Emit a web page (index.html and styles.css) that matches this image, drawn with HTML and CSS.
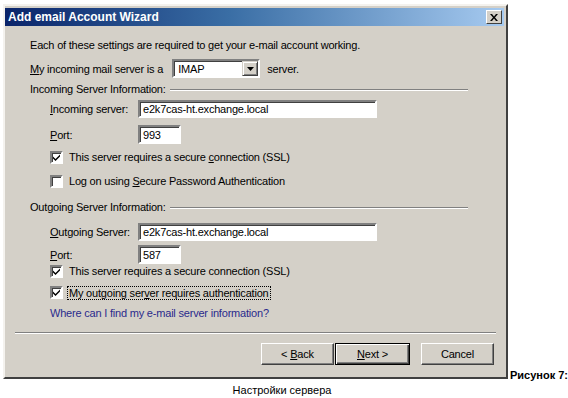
FILE: index.html
```html
<!DOCTYPE html>
<html>
<head>
<meta charset="utf-8">
<link rel="stylesheet" href="styles.css">
</head>
<body>
<div class="page">
  <div class="shot">
    <div class="dialog">
      <div class="titlebar">
        <span class="title">Add email Account Wizard</span>
        <span class="close"><svg width="8" height="7" viewBox="0 0 8 7"><path d="M0 0h2l2 2.5L6 0h2L5 3.5 8 7H6L4 4.5 2 7H0l3-3.5z" fill="#000"/></svg></span>
      </div>
      <div class="content">
        <div class="row intro">Each of these settings are required to get your e-mail account working.</div>
        <div class="row type-row">
          <span><u>M</u>y incoming mail server is a</span>
          <div class="select"><span class="sel-text">IMAP</span><span class="drop"><svg width="7" height="4" viewBox="0 0 7 4"><path d="M0 0h7L3.5 4z" fill="#000"/></svg></span></div>
          <span>server.</span>
        </div>
        <div class="row group g1"><span>Incoming Server Information:</span><span class="etch"></span></div>
        <div class="row field f1"><span class="label"><u>I</u>ncoming server:</span><div class="input wide">e2k7cas-ht.exchange.local</div></div>
        <div class="row field f2"><span class="label"><u>P</u>ort:</span><div class="input port">993</div></div>
        <div class="row check c1"><span class="box checked"><svg width="7" height="7" viewBox="0 0 7 7"><path d="M0 2.5l2.5 2.5L7 0.5V2.5L2.5 7 0 4.5z" fill="#000"/></svg></span><span>This server requires a secure <u>c</u>onnection (SSL)</span></div>
        <div class="row check c2"><span class="box"></span><span>Log on using <u>S</u>ecure Password Authentication</span></div>
        <div class="row group g2"><span>Outgoing Server Information:</span><span class="etch"></span></div>
        <div class="row field f3"><span class="label"><u>O</u>utgoing Server:</span><div class="input wide">e2k7cas-ht.exchange.local</div></div>
        <div class="row field f4"><span class="label"><u>P</u>ort:</span><div class="input port">587</div></div>
        <div class="row check c3"><span class="box checked"><svg width="7" height="7" viewBox="0 0 7 7"><path d="M0 2.5l2.5 2.5L7 0.5V2.5L2.5 7 0 4.5z" fill="#000"/></svg></span><span>This server requires a secure connection (SSL)</span></div>
        <div class="row check c4"><span class="box checked"><svg width="7" height="7" viewBox="0 0 7 7"><path d="M0 2.5l2.5 2.5L7 0.5V2.5L2.5 7 0 4.5z" fill="#000"/></svg></span><span class="focus">My outgoing ser<u>v</u>er requires authentication</span></div>
        <div class="row link">Where can I find my e-mail server information?</div>
      </div>
      <div class="sep"></div>
      <div class="buttons">
        <div class="btn"><span>&lt; <u>B</u>ack</span></div>
        <div class="btn default"><span><u>N</u>ext &gt;</span></div>
        <div class="btn cancel"><span>Cancel</span></div>
      </div>
    </div>
    <div class="fig">Рисунок 7:</div>
  </div>
  <div class="caption">Настройки сервера</div>
</div>
</body>
</html>
```

FILE: styles.css
```css
* { box-sizing: border-box; }
html, body { margin: 0; padding: 0; background: #fff; }
body {
  font-family: "Liberation Sans", Arial, sans-serif;
  font-size: 11px;
  color: #000;
  width: 568px;
  height: 398px;
  overflow: hidden;
}
u { text-decoration: underline; text-underline-offset: 1px; }

.shot { display: flex; align-items: flex-end; }

.dialog {
  margin: 4px 0 0 3px;
  width: 505px;
  height: 375px;
  background: #d4d0c8;
  border-style: solid;
  border-width: 2px;
  border-color: #f4f2ee #404040 #404040 #f4f2ee;
  padding: 2px 2px 0 0;
  display: flex;
  flex-direction: column;
  letter-spacing: -0.2px;
}

.titlebar {
  height: 18px;
  background: linear-gradient(to right, #0a246a 0%, #3a6ea5 45%, #a6caf0 100%);
  display: flex;
  align-items: center;
  justify-content: space-between;
  padding: 0 2px 0 3px;
  letter-spacing: 0;
}
.title {
  color: #fff;
  font-weight: bold;
  font-size: 12px;
}
.close {
  width: 16px;
  height: 14px;
  background: #d4d0c8;
  border-style: solid;
  border-width: 1px;
  border-color: #fff #404040 #404040 #fff;
  display: flex;
  align-items: center;
  justify-content: center;
}

.content {
  padding-left: 25px;
  display: flex;
  flex-direction: column;
}
.row { display: flex; align-items: center; white-space: nowrap; }

.intro { margin-top: 11px; height: 16px; }
.type-row { margin-top: 6px; height: 19px; }
.type-row > span:first-child { margin-right: 9px; }

.select {
  width: 88px;
  height: 19px;
  background: #fff;
  border-style: solid;
  border-width: 2px;
  border-color: #808080 #fff #fff #808080;
  box-shadow: inset 1px 1px 0 #404040;
  display: flex;
  align-items: center;
  justify-content: space-between;
  margin-right: 7px;
  padding-left: 4px;
}
.drop {
  width: 16px;
  height: 15px;
  background: #d4d0c8;
  border-style: solid;
  border-width: 1px;
  border-color: #d4d0c8 #404040 #404040 #d4d0c8;
  box-shadow: inset 1px 1px 0 #fff, inset -1px -1px 0 #808080;
  display: flex;
  align-items: center;
  justify-content: center;
}

.group { height: 16px; }
.g1 { margin-top: 3px; }
.g2 { margin-top: 11px; }
.etch {
  flex: 1;
  margin: 1px 36px 0 4px;
  height: 2px;
  border-top: 1px solid #808080;
  border-bottom: 1px solid #fff;
}

.field { padding-left: 20px; }
.label { width: 88px; }
.f1 { margin-top: 3px; height: 18px; }
.f2 { margin-top: 7px; height: 19px; }
.f3 { margin-top: 8px; height: 18px; }
.f4 { margin-top: 4px; height: 19px; }

.input {
  height: 100%;
  background: #fff;
  border-style: solid;
  border-width: 2px;
  border-color: #808080 #fff #fff #808080;
  box-shadow: inset 1px 1px 0 #404040;
  padding-left: 3px;
  display: flex;
  align-items: center;
}
.input.wide { width: 239px; }
.input.port { width: 43px; }

.check { padding-left: 20px; height: 14px; }
.c1 { margin-top: 6px; }
.c2 { margin-top: 10px; }
.c3 { margin-top: 0; }
.c4 { margin-top: 7px; height: 15px; }
.box {
  width: 13px;
  height: 13px;
  background: #fff;
  border-style: solid;
  border-width: 2px;
  border-color: #808080 #fff #fff #808080;
  box-shadow: inset 1px 1px 0 #404040;
  margin-right: 6px;
  display: flex;
  align-items: center;
  justify-content: center;
  flex: none;
}
.focus {
  outline: 1px dotted #000;
  outline-offset: 0;
  padding: 0 1px;
  margin-left: -1px;
}

.link {
  margin-top: 6px;
  padding-left: 20px;
  height: 14px;
  color: #2a2a8c;
}

.sep {
  margin: 12px 8px 0 10px;
  height: 2px;
  border-top: 1px solid #808080;
  border-bottom: 1px solid #fff;
}

.buttons {
  display: flex;
  justify-content: flex-end;
  padding-right: 10px;
  margin-top: 9px;
}
.btn {
  width: 73px;
  height: 22px;
  background: #d4d0c8;
  border-style: solid;
  border-width: 1px;
  border-color: #fff #404040 #404040 #fff;
  box-shadow: inset -1px -1px 0 #808080;
  display: flex;
  align-items: center;
  justify-content: center;
}
.btn.default {
  width: 75px;
  border: 1px solid #000;
  box-shadow: inset 1px 1px 0 #fff, inset -1px -1px 0 #404040, inset -2px -2px 0 #808080;
  margin-left: 1px;
}
.btn.cancel { margin-left: 11px; }

.fig {
  font-weight: bold;
  margin-left: 2px;
  line-height: 12px;
  margin-bottom: -2px;
}

.caption {
  text-align: center;
  margin-top: 5px;
  padding-right: 4px;
  line-height: 13px;
}
```
